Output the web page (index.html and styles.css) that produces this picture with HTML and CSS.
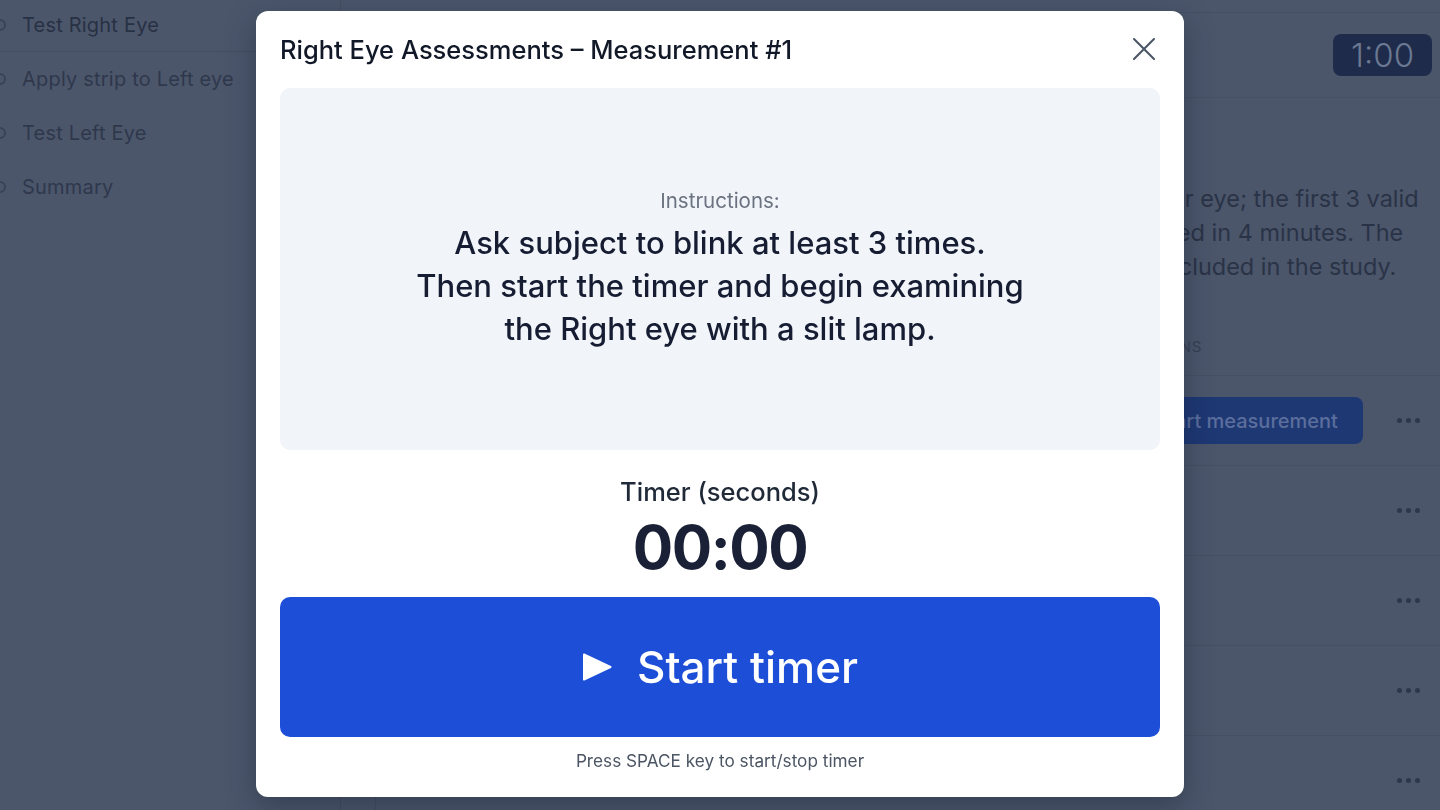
FILE: index.html
```html
<!DOCTYPE html>
<html lang="en">
<head>
  <meta charset="UTF-8">
  <title>Right Eye Assessments</title>
  <link rel="stylesheet" href="styles.css">
</head>
<body>
  <div class="app">
    <aside class="sidebar">
      <ul class="steps">
        <li class="step current"><span class="dot"></span>Test Right Eye</li>
        <li class="step"><span class="dot"></span>Apply strip to Left eye</li>
        <li class="step"><span class="dot"></span>Test Left Eye</li>
        <li class="step"><span class="dot"></span>Summary</li>
      </ul>
    </aside>

    <main class="content">
      <section class="panel">
        <header class="panel-head">
          <span class="clock">1:00</span>
        </header>

        <div class="panel-body">
          <h2 class="panel-title">Right Eye Assessments</h2>
          <p class="lead">
            Run tear break-up time measurements in the Right eye, then the other eye; the first 3 valid<br>
            measurements will be used for scoring and they must all be completed in 4 minutes. The<br>
            remaining measurements taken after this time limit expired are not included in the study.
          </p>

          <div class="table">
            <div class="thead">
              <span>Measurement</span>
              <span>Actions</span>
              <span></span>
            </div>
            <div class="trow">
              <span>Measurement #1</span>
              <button class="measure">Start measurement</button>
              <span class="more"><i></i><i></i><i></i></span>
            </div>
            <div class="trow">
              <span>Measurement #2</span>
              <span></span>
              <span class="more"><i></i><i></i><i></i></span>
            </div>
            <div class="trow">
              <span>Measurement #3</span>
              <span></span>
              <span class="more"><i></i><i></i><i></i></span>
            </div>
            <div class="trow">
              <span>Measurement #4</span>
              <span></span>
              <span class="more"><i></i><i></i><i></i></span>
            </div>
            <div class="trow">
              <span>Measurement #5</span>
              <span></span>
              <span class="more"><i></i><i></i><i></i></span>
            </div>
          </div>
        </div>
      </section>
    </main>
  </div>

  <div class="overlay">
    <div class="modal">
      <div class="modal-head">
        <h1 class="modal-title">Right Eye Assessments – Measurement #1</h1>
        <button class="close" aria-label="Close">
          <svg width="22" height="22" viewBox="0 0 22 22">
            <path d="M1 1 L21 21 M21 1 L1 21" stroke="#4b5563" stroke-width="2" stroke-linecap="round" fill="none"/>
          </svg>
        </button>
      </div>

      <div class="instructions">
        <div class="instructions-label">Instructions:</div>
        <div class="instructions-text">
          Ask subject to blink at least 3 times.<br>
          Then start the timer and begin examining<br>
          the Right eye with a slit lamp.
        </div>
      </div>

      <div class="timer-label">Timer (seconds)</div>
      <div class="timer">00:00</div>

      <button class="start">
        <svg width="30" height="30" viewBox="0 0 30 30">
          <path d="M2 2.5 L28.5 15 L2 27.5 Z" fill="#fff" stroke="#fff" stroke-width="2" stroke-linejoin="round"/>
        </svg>
        <span>Start timer</span>
      </button>

      <div class="hint">Press SPACE key to start/stop timer</div>
    </div>
  </div>
</body>
</html>
```

FILE: styles.css
```css
* {
  box-sizing: border-box;
}

body {
  margin: 0;
  height: 810px;
  overflow: hidden;
  background: #4b566b;
  font-family: Inter, "Noto Sans", sans-serif;
  color: #2b3448;
}

.app {
  display: flex;
  height: 810px;
}

/* sidebar (dimmed behind modal) */
.sidebar {
  width: 341px;
  flex-shrink: 0;
  border-right: 1px solid #444e62;
}

.steps {
  list-style: none;
  margin: -2px 0 0;
  padding: 0;
}

.step {
  height: 54px;
  display: flex;
  align-items: center;
  gap: 16px;
  margin-left: -6px;
  font-size: 20px;
  letter-spacing: 0.2px;
  color: #2f384b;
}

.step.current {
  border-bottom: 1px solid #444e62;
  color: #283144;
}

.step .dot {
  width: 12px;
  height: 12px;
  border: 2px solid #3a4356;
  border-radius: 50%;
}

/* main area */
.content {
  flex: 1;
  padding: 12px 0 0 34px;
}

.panel {
  height: 100%;
  border-left: 1px solid #444e62;
  border-top: 1px solid #465065;
}

.panel-head {
  height: 85px;
  display: flex;
  justify-content: flex-end;
  align-items: flex-start;
  padding: 21px 8px 0 0;
  border-bottom: 1px solid #475166;
}

.clock {
  background: #1f2b4a;
  color: #6a7891;
  font-size: 33px;
  font-weight: 300;
  line-height: 42px;
  width: 99px;
  text-align: center;
  border-radius: 8px;
}

.panel-body {
  padding: 35px 0 0 45px;
}

.panel-title {
  margin: 0 0 20px;
  font-size: 24px;
  font-weight: 600;
  color: #262f42;
}

.lead {
  margin: 0;
  font-size: 23.5px;
  line-height: 34px;
  color: #2a3346;
  white-space: nowrap;
}

.table {
  margin-top: 34px;
}

.thead,
.trow {
  display: grid;
  grid-template-columns: 1fr 233px 77px;
  align-items: center;
  border-bottom: 1px solid #465065;
}

.thead {
  height: 58px;
  font-size: 15px;
  letter-spacing: 0.05em;
  text-transform: uppercase;
  color: #384155;
}

.trow {
  height: 90px;
  font-size: 18px;
}

.measure {
  height: 47px;
  width: 233px;
  border: none;
  border-radius: 8px;
  background: #1e3874;
  color: #5b6e9c;
  font-family: inherit;
  font-size: 20px;
  font-weight: 500;
}

.more {
  display: flex;
  gap: 4px;
  justify-content: flex-end;
  padding-right: 20px;
}

.more i {
  width: 5px;
  height: 5px;
  border-radius: 50%;
  background: #2e3649;
}

/* modal */
.overlay {
  position: fixed;
  inset: 0;
  display: flex;
  justify-content: center;
  align-items: flex-start;
  padding-top: 11px;
}

.modal {
  width: 928px;
  height: 786px;
  background: #fff;
  border-radius: 12px;
  padding: 24px;
  display: flex;
  flex-direction: column;
  box-shadow: 0 10px 30px rgba(15, 23, 42, 0.35);
}

.modal-head {
  display: flex;
  justify-content: space-between;
  align-items: center;
  height: 28px;
}

.modal-title {
  margin: 0;
  font-size: 25.5px;
  font-weight: 500;
  color: #111827;
}

.close {
  border: none;
  background: none;
  padding: 0;
  margin-right: 5px;
  display: flex;
}

.instructions {
  margin-top: 25px;
  height: 362px;
  background: #f1f4f9;
  border-radius: 10px;
  display: flex;
  flex-direction: column;
  justify-content: center;
  align-items: center;
  text-align: center;
}

.instructions-label {
  font-size: 20.5px;
  line-height: 26px;
  color: #6b7280;
  margin-bottom: 7px;
}

.instructions-text {
  font-size: 31px;
  line-height: 43px;
  font-weight: 500;
  color: #161d33;
}

.timer-label {
  margin-top: 26px;
  text-align: center;
  font-size: 25.5px;
  line-height: 32px;
  font-weight: 500;
  color: #1f2937;
}

.timer {
  margin-top: 3px;
  text-align: center;
  font-size: 60px;
  line-height: 72px;
  font-weight: 700;
  letter-spacing: -1.5px;
  color: #1a2036;
}

.start {
  margin-top: 14px;
  height: 140px;
  border: none;
  border-radius: 10px;
  background: #1d4ed8;
  color: #fff;
  font-family: inherit;
  font-size: 44px;
  font-weight: 500;
  display: flex;
  justify-content: center;
  align-items: center;
  gap: 25px;
}

.hint {
  margin-top: 12px;
  text-align: center;
  font-size: 17.2px;
  line-height: 24px;
  color: #4b5563;
}
```
